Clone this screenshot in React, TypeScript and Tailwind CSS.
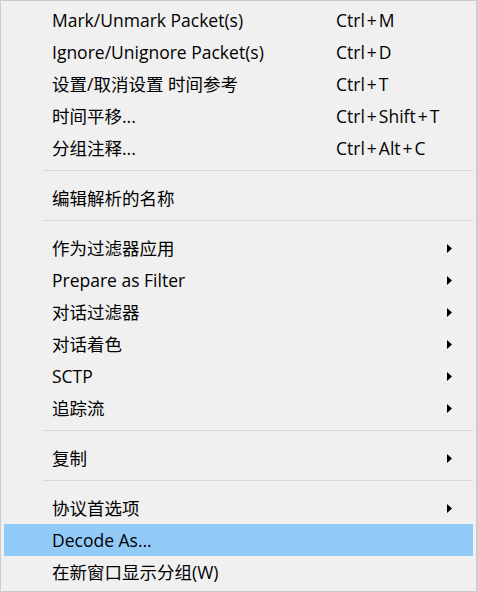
import { ReactNode } from "react";

type Item =
  | { kind: "sep" }
  | { kind: "item"; label: string; shortcut?: string; sub?: boolean; active?: boolean };

const items: Item[] = [
  { kind: "item", label: "Mark/Unmark Packet(s)", shortcut: "Ctrl+M" },
  { kind: "item", label: "Ignore/Unignore Packet(s)", shortcut: "Ctrl+D" },
  { kind: "item", label: "设置/取消设置 时间参考", shortcut: "Ctrl+T" },
  { kind: "item", label: "时间平移...", shortcut: "Ctrl+Shift+T" },
  { kind: "item", label: "分组注释...", shortcut: "Ctrl+Alt+C" },
  { kind: "sep" },
  { kind: "item", label: "编辑解析的名称" },
  { kind: "sep" },
  { kind: "item", label: "作为过滤器应用", sub: true },
  { kind: "item", label: "Prepare as Filter", sub: true },
  { kind: "item", label: "对话过滤器", sub: true },
  { kind: "item", label: "对话着色", sub: true },
  { kind: "item", label: "SCTP", sub: true },
  { kind: "item", label: "追踪流", sub: true },
  { kind: "sep" },
  { kind: "item", label: "复制", sub: true },
  { kind: "sep" },
  { kind: "item", label: "协议首选项", sub: true },
  { kind: "item", label: "Decode As...", active: true },
  { kind: "item", label: "在新窗口显示分组(W)" },
];

function Arrow() {
  return (
    <svg width="5" height="9" viewBox="0 0 5 9" className="block">
      <path d="M0 0 L5 4.5 L0 9 Z" fill="#000" />
    </svg>
  );
}

// shortcut text: widen the "+" like the Windows menu font does
function Shortcut({ text }: { text: string }) {
  const parts = text.split("+");
  return (
    <span className="absolute left-[332px] top-[8px] leading-none">
      {parts.map((p, i) => (
        <span key={i}>
          {i > 0 && <span className="px-[2px]">+</span>}
          {p}
        </span>
      ))}
    </span>
  );
}

function Row({ children, active }: { children: ReactNode; active?: boolean }) {
  return (
    <div className={`relative flex h-8 items-center pl-12 pt-px ${active ? "bg-[#91c9f7]" : ""}`}>
      {children}
    </div>
  );
}

export default function App() {
  return (
    <div
      className="w-[478px] h-[592px] bg-[#f0f0f0] border border-r-2 border-[#cccccc] pt-[3px] px-[3px] text-[17.5px] text-black box-border"
      style={{ fontFamily: '"Open Sans", "Noto Sans CJK SC", sans-serif' }}
    >
      {items.map((it, i) =>
        it.kind === "sep" ? (
          <div key={i} className="h-[18px] pt-[6px] pl-[39px]">
            <div className="h-px bg-[#d7d7d7]" />
          </div>
        ) : (
          <Row key={i} active={it.active}>
            <span className="leading-none">{it.label}</span>
            {it.shortcut && <Shortcut text={it.shortcut} />}
            {it.sub && (
              <span className="absolute left-[443px]">
                <Arrow />
              </span>
            )}
          </Row>
        )
      )}
    </div>
  );
}
